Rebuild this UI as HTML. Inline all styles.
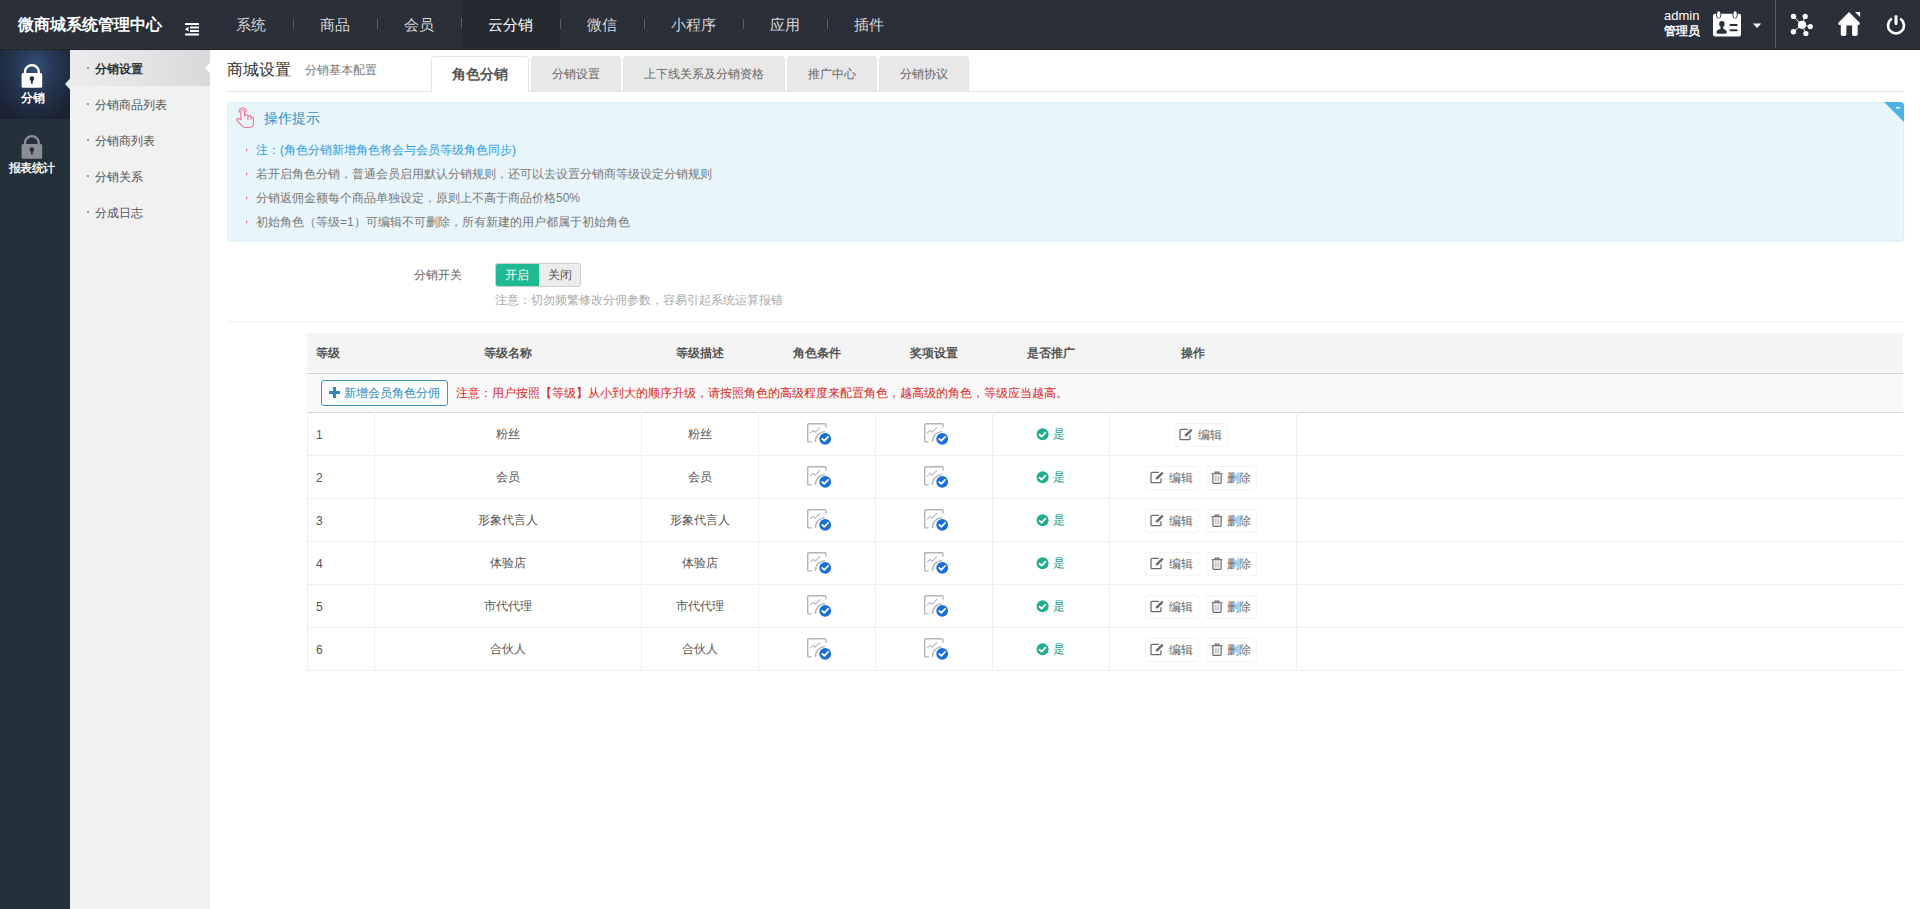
<!DOCTYPE html>
<html><head><meta charset="utf-8">
<style>
*{margin:0;padding:0;box-sizing:border-box}
html,body{width:1920px;height:909px;overflow:hidden;background:#fff;font-family:"Liberation Sans",sans-serif;}
.a{position:absolute;white-space:nowrap}
#top{position:absolute;left:0;top:0;width:1920px;height:50px;background:#2b2f3a;}
#top .l1{position:absolute;left:0;top:48px;width:1920px;height:1px;background:#30343a}
#top .l2{position:absolute;left:0;top:49px;width:1920px;height:1px;background:#1f2227}
.logo{left:18px;top:15px;font-size:16px;font-weight:bold;color:#fff;line-height:20px}
.nav{position:absolute;left:209px;top:1px;height:48px;display:flex}
.nav div{position:relative;padding:0 27px;height:48px;line-height:48px;font-size:15px;color:#d5d7da}
.nav div+div:before{content:"";position:absolute;left:0;top:18px;width:1px;height:10px;background:#5a5e66}
.nav div.on{color:#fff}
.nav div.on{background:linear-gradient(90deg,transparent 1px,#252932 1px);margin-top:-1px;padding-top:1px;height:48px}
#lc{position:absolute;left:0;top:50px;width:70px;height:859px;background:#24303a}
#lc .act{position:absolute;left:0;top:0;width:70px;height:69px;background:radial-gradient(ellipse 45px 55px at 35px 18px,#34507a 0%,#263752 45%,#1b2333 100%)}
#sb{position:absolute;left:70px;top:50px;width:140px;height:859px;background:#f1f1f1}
#sb .act{position:absolute;left:0;top:0;width:140px;height:36px;background:linear-gradient(90deg,#ececee 0%,#e2e2e4 60%,#d8d8da 100%)}
#sb .item{position:absolute;left:25px;font-size:12px;color:#555;line-height:16px}
#sb .dot{position:absolute;left:17px;width:2px;height:2px;background:#999}
</style></head><body>
<div id="top">
  <div class="l1"></div><div class="l2"></div>
  <div class="a logo">微商城系统管理中心</div>
  <svg class="a" style="left:184px;top:23px" width="16" height="13" viewBox="0 0 16 13">
    <rect x="1" y="0" width="14" height="2" fill="#fff"/>
    <rect x="6" y="3.5" width="9" height="2" fill="#fff"/>
    <rect x="6" y="7" width="9" height="2" fill="#fff"/>
    <rect x="1" y="10.5" width="14" height="2" fill="#fff"/>
    <path d="M1 6.2 L4.5 3.8 L4.5 8.6 Z" fill="#fff"/>
  </svg>
  <div class="nav">
    <div>系统</div><div>商品</div><div>会员</div><div class="on">云分销</div><div>微信</div><div>小程序</div><div>应用</div><div>插件</div>
  </div>
  <div class="a" style="left:1664px;top:9px;font-size:13px;color:#fff;line-height:14px">admin</div>
  <div class="a" style="left:1664px;top:23px;font-size:12px;font-weight:bold;color:#fff;line-height:16px">管理员</div>
  <svg class="a" style="left:1712px;top:10px" width="30" height="28" viewBox="0 0 30 28">
    <rect x="1" y="3.7" width="28" height="22.8" rx="2" fill="#fff"/>
    <ellipse cx="6.7" cy="4.6" rx="2.6" ry="4" fill="#2b2f3a"/>
    <ellipse cx="6.7" cy="4.6" rx="1.7" ry="3.4" fill="#fff"/>
    <ellipse cx="23.1" cy="4.6" rx="2.6" ry="4" fill="#2b2f3a"/>
    <ellipse cx="23.1" cy="4.6" rx="1.7" ry="3.4" fill="#fff"/>
    <ellipse cx="9.85" cy="14.1" rx="2.75" ry="3" fill="#2b2f3a"/>
    <path d="M8.6 16.5 L11.1 16.5 L11.4 18.9 Q14.6 19.6 14.9 22.3 Q14.9 23.8 12.5 23.8 L7 23.8 Q4.2 23.8 4.3 22.3 Q4.7 19.6 8.3 18.9 Z" fill="#2b2f3a"/>
    <rect x="17.4" y="14.1" width="8.3" height="2" rx="1" fill="#2b2f3a"/>
    <rect x="17.4" y="19.3" width="8.3" height="2" rx="1" fill="#2b2f3a"/>
  </svg>
  <svg class="a" style="left:1752px;top:23px" width="10" height="6" viewBox="0 0 10 6"><path d="M0.8 0.6 L9.2 0.6 L5 5 Z" fill="#fff"/></svg>
  <div class="a" style="left:1775px;top:0;width:1px;height:48px;background:#5a5f68"></div>
  <svg class="a" style="left:1788px;top:11px" width="28" height="28" viewBox="0 0 28 28">
    <g stroke="#fff" stroke-width="0.9">
      <line x1="14" y1="13.8" x2="5.5" y2="5.4"/><line x1="14" y1="13.8" x2="17.2" y2="5.4"/>
      <line x1="14" y1="13.8" x2="22.3" y2="15.6"/><line x1="14" y1="13.8" x2="5.5" y2="20.7"/>
      <line x1="14" y1="13.8" x2="17.9" y2="22.5"/>
    </g>
    <g fill="#fff">
      <circle cx="14" cy="13.8" r="4.1"/>
      <circle cx="5.5" cy="5.4" r="2.7"/><circle cx="17.2" cy="5.4" r="2.6"/>
      <circle cx="22.3" cy="15.6" r="2.6"/><circle cx="5.5" cy="20.7" r="2.7"/>
      <circle cx="17.9" cy="22.5" r="2.6"/>
    </g>
  </svg>
  <svg class="a" style="left:1836px;top:10px" width="28" height="28" viewBox="0 0 28 28">
    <path d="M13 2.1 L2.8 12.3 Q1.6 13.8 3 14.9 L4.8 14.9 L4.8 24.4 Q4.8 26.1 7.6 26.1 Q10.4 26.1 10.4 24.4 L10.4 15.4 L16.1 15.4 L16.1 24.4 Q16.1 26.1 18.9 26.1 Q21.7 26.1 21.7 24.4 L21.7 14.9 L23 14.9 Q24.5 13.8 23.5 12.4 Z" fill="#fff"/>
    <path d="M19 2.1 L24.1 2.1 L24.1 7 Z" fill="#fff"/>
  </svg>
  <svg class="a" style="left:1884px;top:12px" width="24" height="25" viewBox="0 0 24 25">
    <path d="M7 7.2 A8 8 0 1 0 17 7.2" fill="none" stroke="#fff" stroke-width="2.6" stroke-linecap="round"/>
    <line x1="12" y1="4.5" x2="12" y2="11.6" stroke="#fff" stroke-width="3" stroke-linecap="round"/>
  </svg>
</div>
<div id="lc">
  <div class="act"></div>
  <svg class="a" style="left:21px;top:13px" width="22" height="25" viewBox="0 0 22 25">
    <path d="M4 11 L4 9 A6.9 6.9 0 0 1 17.8 9 L17.8 11" fill="none" stroke="#fff" stroke-width="2.4"/>
    <rect x="0.6" y="10" width="20.6" height="14.7" rx="1.5" fill="#fff"/>
    <circle cx="10.9" cy="15.6" r="2.3" fill="#1f2838"/><path d="M9.8 16.2 L12 16.2 L11.6 20.8 L10.2 20.8 Z" fill="#1f2838"/>
  </svg>
  <div class="a" style="left:21px;top:40px;font-size:12px;font-weight:bold;color:#fff;line-height:16px">分销</div>
  <svg class="a" style="left:21px;top:84px" width="22" height="25" viewBox="0 0 22 25">
    <path d="M4 11 L4 9 A6.9 6.9 0 0 1 17.8 9 L17.8 11" fill="none" stroke="#8b8e94" stroke-width="2.4"/>
    <rect x="0.6" y="10" width="20.6" height="14.7" rx="1.5" fill="#8b8e94"/>
    <circle cx="10.9" cy="15.6" r="2.3" fill="#24303a"/><path d="M9.8 16.2 L12 16.2 L11.6 20.8 L10.2 20.8 Z" fill="#24303a"/>
  </svg>
  <div class="a" style="left:9px;top:110px;font-size:12px;font-weight:bold;color:#f3f3ee;line-height:16px;letter-spacing:-0.6px">报表统计</div>
  <svg class="a" style="left:65px;top:28px" width="5" height="12" viewBox="0 0 5 12"><path d="M5 0.5 L0 6 L5 11.5 Z" fill="#e8e8ea"/></svg>
</div>
<div id="sb">
  <div class="act"></div>
  <div class="dot" style="top:17px"></div><div class="item" style="top:11px;font-weight:bold;color:#333">分销设置</div>
  <div class="dot" style="top:53px"></div><div class="item" style="top:47px">分销商品列表</div>
  <div class="dot" style="top:89px"></div><div class="item" style="top:83px">分销商列表</div>
  <div class="dot" style="top:125px"></div><div class="item" style="top:119px">分销关系</div>
  <div class="dot" style="top:161px"></div><div class="item" style="top:155px">分成日志</div>
  <svg class="a" style="left:135px;top:12px" width="5" height="12" viewBox="0 0 5 12"><path d="M5 0.5 L0 6 L5 11.5 Z" fill="#fff"/></svg>
</div>

<style>
.tab{position:absolute;top:56px;height:35px;border:1px solid #e4e4e4;border-bottom:none;border-radius:4px 4px 0 0;background:#e8e8e8;font-size:12px;color:#666;line-height:35px;text-align:center}
.tab.on{background:#fff;color:#555;font-weight:bold;font-size:14px;height:36px}
.tip{position:absolute;left:256px;font-size:12px;color:#777;line-height:16px}
.tipb{position:absolute;left:246px;width:0;height:0;border-left:2px solid #ea89a3;border-top:2px solid transparent;border-bottom:2px solid transparent}
.th{position:absolute;top:345px;font-size:12px;font-weight:bold;color:#555;line-height:16px}
.vl{position:absolute;top:412px;width:1px;height:258px;background:#efefef}
.hl{position:absolute;left:307px;width:1596px;height:1px;background:#eeeeee}
.td{position:absolute;font-size:12px;color:#555;line-height:16px;text-align:center}
.btn{position:absolute;height:24px;border:1px solid #f4f4f4;box-shadow:0 0 1px rgba(0,0,0,0.03);border-radius:3px;background:#fff;font-size:12px;color:#666;line-height:22px}
</style>
<div class="a" style="left:227px;top:60px;font-size:16px;color:#333;line-height:20px">商城设置</div>
<div class="a" style="left:305px;top:62px;font-size:12px;color:#777;line-height:16px">分销基本配置</div>
<div class="a" style="left:227px;top:91px;width:1677px;height:1px;background:#e6e6e6"></div>
<div class="tab on" style="left:431px;width:98px">角色分销</div>
<div class="tab" style="left:531px;width:90px">分销设置</div>
<div class="tab" style="left:623px;width:162px">上下线关系及分销资格</div>
<div class="tab" style="left:787px;width:90px">推广中心</div>
<div class="tab" style="left:879px;width:90px">分销协议</div>

<div class="a" style="left:227px;top:102px;width:1677px;height:139px;background:#e8f6fc;border-radius:4px;border:1px solid #dbedf7;box-shadow:0 1px 1px rgba(120,150,170,0.12)"></div>
<svg class="a" style="left:1884px;top:102px" width="20" height="20" viewBox="0 0 20 20"><path d="M0 0 L16 0 Q20 0 20 4 L20 20 Z" fill="#4bb3e6"/><rect x="12" y="5" width="4" height="1.4" fill="#fff"/></svg>
<svg class="a" style="left:234px;top:106px" width="22" height="24" viewBox="0 0 22 24">
  <path d="M6.9 13.8 L6.9 5.6 A1.85 1.85 0 0 1 10.6 5.6 L10.6 10.2 A1.7 1.7 0 0 1 14 10.2 L14 11.2 A1.6 1.6 0 0 1 17.2 11.2 L17.2 12 A1.1 1.1 0 0 1 19.4 12.2 L19.4 17.5 Q19.4 21.5 15 21.5 L11.5 21.5 Q9.5 21.5 8.2 20 L3 14.6 Q2 13.3 3.3 12.8 Q4.8 12.3 6.9 13.8 Z" fill="none" stroke="#ee7393" stroke-width="1.1" stroke-linejoin="round"/>
  <path d="M5.37 6.63 A3.6 3.6 0 1 1 12.13 6.63" fill="none" stroke="#ee7393" stroke-width="1.1"/>
  <path d="M14 11.2 L14 14 M17.2 12 L17.2 14.2" stroke="#ee7393" stroke-width="0.9"/>
</svg>
<div class="a" style="left:264px;top:109px;font-size:14px;color:#2e8fc4;line-height:18px">操作提示</div>
<div class="tipb" style="top:148px"></div><div class="tip" style="top:142px;color:#2c9be0">注：(角色分销新增角色将会与会员等级角色同步)</div>
<div class="tipb" style="top:172px"></div><div class="tip" style="top:166px">若开启角色分销，普通会员启用默认分销规则，还可以去设置分销商等级设定分销规则</div>
<div class="tipb" style="top:196px"></div><div class="tip" style="top:190px">分销返佣金额每个商品单独设定，原则上不高于商品价格50%</div>
<div class="tipb" style="top:220px"></div><div class="tip" style="top:214px">初始角色（等级=1）可编辑不可删除，所有新建的用户都属于初始角色</div>

<div class="a" style="left:414px;top:267px;font-size:12px;color:#666;line-height:16px">分销开关</div>
<div class="a" style="left:495px;top:263px;width:86px;height:24px;border:1px solid #cfcfcf;border-radius:3px;background:#ececec;overflow:hidden">
  <div class="a" style="left:-1px;top:-1px;width:44px;height:24px;background:#1fba92;color:#fff;font-size:12px;line-height:24px;text-align:center">开启</div>
  <div class="a" style="left:43px;top:0;width:42px;height:22px;color:#555;font-size:12px;line-height:22px;text-align:center">关闭</div>
</div>
<div class="a" style="left:495px;top:292px;font-size:12px;color:#aaa;line-height:16px">注意：切勿频繁修改分佣参数，容易引起系统运算报错</div>
<div class="a" style="left:227px;top:321px;width:1677px;height:1px;background:#f0f0f0"></div>

<div class="a" style="left:307px;top:333px;width:1596px;height:39px;background:#f4f4f4"></div>
<div class="a" style="left:307px;top:373px;width:1596px;height:1px;background:#d2d2d2"></div>
<div class="a" style="left:307px;top:374px;width:1596px;height:38px;background:#f9f9f9"></div>
<div class="a" style="left:307px;top:412px;width:1596px;height:1px;background:#d8d8d8"></div>
<div class="th" style="left:316px">等级</div>
<div class="th" style="left:484px">等级名称</div>
<div class="th" style="left:676px">等级描述</div>
<div class="th" style="left:793px">角色条件</div>
<div class="th" style="left:910px">奖项设置</div>
<div class="th" style="left:1027px">是否推广</div>
<div class="th" style="left:1181px">操作</div>
<div class="a" style="left:321px;top:380px;width:127px;height:26px;border:1px solid #3d93bd;border-radius:3px;background:#fff;font-size:12px;color:#2a8bbf;line-height:24px;padding-left:22px">新增会员角色分佣</div>
<svg class="a" style="left:329px;top:387px" width="11" height="11" viewBox="0 0 11 11"><rect x="4" y="0" width="3" height="11" fill="#2a8bbf"/><rect x="0" y="4" width="11" height="3" fill="#2a8bbf"/></svg>
<div class="a" style="left:456px;top:385px;font-size:12px;color:#dc1f24;line-height:16px">注意：用户按照【等级】从小到大的顺序升级，请按照角色的高级程度来配置角色，越高级的角色，等级应当越高。</div>
<div class="vl" style="left:307px"></div>
<div class="vl" style="left:374px"></div>
<div class="vl" style="left:641px"></div>
<div class="vl" style="left:758px"></div>
<div class="vl" style="left:875px"></div>
<div class="vl" style="left:992px"></div>
<div class="vl" style="left:1109px"></div>
<div class="vl" style="left:1296px"></div>
<div class="hl" style="top:455px"></div>
<div class="td" style="left:316px;top:427px;text-align:left">1</div>
<div class="td" style="left:374px;width:267px;top:426px">粉丝</div>
<div class="td" style="left:641px;width:117px;top:426px">粉丝</div>
<svg class="a" style="left:806px;top:423px" width="26" height="24" viewBox="0 0 26 24">
<path d="M5.8 18.9 L2.7 18.9 Q1.7 18.9 1.7 17.9 L1.7 1.8 Q1.7 0.8 2.7 0.8 L19 0.8 Q20 0.8 20 1.8 L20 4.6" fill="none" stroke="#b1b4bb" stroke-width="1.4"/>
<path d="M4 10.2 L7.3 7.4 L9 9.3 L14 4.4" fill="none" stroke="#b1b4bb" stroke-width="1.1"/>
<path d="M9.4 19 A10 10 0 0 1 19 8.6" fill="none" stroke="#b1b4bb" stroke-width="1.3"/>
<circle cx="19.2" cy="15.8" r="5.9" fill="#1a6ed8"/>
<path d="M16.2 15.9 L18.3 17.9 L22.1 13.9" fill="none" stroke="#fff" stroke-width="1.7" stroke-linecap="round" stroke-linejoin="round"/>
</svg>
<svg class="a" style="left:923px;top:423px" width="26" height="24" viewBox="0 0 26 24">
<path d="M5.8 18.9 L2.7 18.9 Q1.7 18.9 1.7 17.9 L1.7 1.8 Q1.7 0.8 2.7 0.8 L19 0.8 Q20 0.8 20 1.8 L20 4.6" fill="none" stroke="#b1b4bb" stroke-width="1.4"/>
<path d="M4 10.2 L7.3 7.4 L9 9.3 L14 4.4" fill="none" stroke="#b1b4bb" stroke-width="1.1"/>
<path d="M9.4 19 A10 10 0 0 1 19 8.6" fill="none" stroke="#b1b4bb" stroke-width="1.3"/>
<circle cx="19.2" cy="15.8" r="5.9" fill="#1a6ed8"/>
<path d="M16.2 15.9 L18.3 17.9 L22.1 13.9" fill="none" stroke="#fff" stroke-width="1.7" stroke-linecap="round" stroke-linejoin="round"/>
</svg>
<svg class="a" style="left:1036px;top:428px" width="13" height="13" viewBox="0 0 13 13"><circle cx="6.6" cy="6.3" r="6" fill="#22ad8c"/><path d="M3.5 6.6 L5.6 8.6 L9.4 4.6" fill="none" stroke="#fff" stroke-width="1.8" stroke-linecap="round" stroke-linejoin="round"/></svg>
<div class="td" style="left:1053px;top:426px;color:#1d9e80">是</div>
<div class="btn" style="left:1174px;top:423px;width:54px"></div>
<svg class="a" style="left:1179px;top:428px" width="15" height="13" viewBox="0 0 15 13"><path d="M8.8 1.3 L2 1.3 Q1 1.3 1 2.3 L1 10.7 Q1 11.7 2 11.7 L10 11.7 Q11 11.7 11 10.7 L11 7.2" fill="none" stroke="#6a6a6a" stroke-width="1.25"/><path d="M5.6 8.6 L6.1 6.5 L11.9 0.8 L13.6 2.5 L7.8 8.2 Z" fill="#6a6a6a"/></svg>
<div class="td" style="left:1198px;top:427px;color:#666">编辑</div>
<div class="hl" style="top:498px"></div>
<div class="td" style="left:316px;top:470px;text-align:left">2</div>
<div class="td" style="left:374px;width:267px;top:469px">会员</div>
<div class="td" style="left:641px;width:117px;top:469px">会员</div>
<svg class="a" style="left:806px;top:466px" width="26" height="24" viewBox="0 0 26 24">
<path d="M5.8 18.9 L2.7 18.9 Q1.7 18.9 1.7 17.9 L1.7 1.8 Q1.7 0.8 2.7 0.8 L19 0.8 Q20 0.8 20 1.8 L20 4.6" fill="none" stroke="#b1b4bb" stroke-width="1.4"/>
<path d="M4 10.2 L7.3 7.4 L9 9.3 L14 4.4" fill="none" stroke="#b1b4bb" stroke-width="1.1"/>
<path d="M9.4 19 A10 10 0 0 1 19 8.6" fill="none" stroke="#b1b4bb" stroke-width="1.3"/>
<circle cx="19.2" cy="15.8" r="5.9" fill="#1a6ed8"/>
<path d="M16.2 15.9 L18.3 17.9 L22.1 13.9" fill="none" stroke="#fff" stroke-width="1.7" stroke-linecap="round" stroke-linejoin="round"/>
</svg>
<svg class="a" style="left:923px;top:466px" width="26" height="24" viewBox="0 0 26 24">
<path d="M5.8 18.9 L2.7 18.9 Q1.7 18.9 1.7 17.9 L1.7 1.8 Q1.7 0.8 2.7 0.8 L19 0.8 Q20 0.8 20 1.8 L20 4.6" fill="none" stroke="#b1b4bb" stroke-width="1.4"/>
<path d="M4 10.2 L7.3 7.4 L9 9.3 L14 4.4" fill="none" stroke="#b1b4bb" stroke-width="1.1"/>
<path d="M9.4 19 A10 10 0 0 1 19 8.6" fill="none" stroke="#b1b4bb" stroke-width="1.3"/>
<circle cx="19.2" cy="15.8" r="5.9" fill="#1a6ed8"/>
<path d="M16.2 15.9 L18.3 17.9 L22.1 13.9" fill="none" stroke="#fff" stroke-width="1.7" stroke-linecap="round" stroke-linejoin="round"/>
</svg>
<svg class="a" style="left:1036px;top:471px" width="13" height="13" viewBox="0 0 13 13"><circle cx="6.6" cy="6.3" r="6" fill="#22ad8c"/><path d="M3.5 6.6 L5.6 8.6 L9.4 4.6" fill="none" stroke="#fff" stroke-width="1.8" stroke-linecap="round" stroke-linejoin="round"/></svg>
<div class="td" style="left:1053px;top:469px;color:#1d9e80">是</div>
<div class="btn" style="left:1145px;top:466px;width:54px"></div>
<svg class="a" style="left:1150px;top:471px" width="15" height="13" viewBox="0 0 15 13"><path d="M8.8 1.3 L2 1.3 Q1 1.3 1 2.3 L1 10.7 Q1 11.7 2 11.7 L10 11.7 Q11 11.7 11 10.7 L11 7.2" fill="none" stroke="#6a6a6a" stroke-width="1.25"/><path d="M5.6 8.6 L6.1 6.5 L11.9 0.8 L13.6 2.5 L7.8 8.2 Z" fill="#6a6a6a"/></svg>
<div class="td" style="left:1169px;top:470px;color:#666">编辑</div>
<div class="btn" style="left:1206px;top:466px;width:51px"></div>
<svg class="a" style="left:1211px;top:471px" width="12" height="13" viewBox="0 0 12 13"><path d="M0.6 2.7 L11.4 2.7" stroke="#6a6a6a" stroke-width="1.2"/><path d="M4 2.4 L4 1.1 L8 1.1 L8 2.4" fill="none" stroke="#6a6a6a" stroke-width="1.1"/><path d="M1.9 3.2 L1.9 11.3 Q1.9 12.3 2.9 12.3 L9.1 12.3 Q10.1 12.3 10.1 11.3 L10.1 3.2" fill="none" stroke="#6a6a6a" stroke-width="1.2"/><path d="M4.3 4.6 L4.3 10.6 M6 4.6 L6 10.6 M7.7 4.6 L7.7 10.6" stroke="#9a9a9a" stroke-width="0.7"/></svg>
<div class="td" style="left:1227px;top:470px;color:#666">删除</div>
<div class="hl" style="top:541px"></div>
<div class="td" style="left:316px;top:513px;text-align:left">3</div>
<div class="td" style="left:374px;width:267px;top:512px">形象代言人</div>
<div class="td" style="left:641px;width:117px;top:512px">形象代言人</div>
<svg class="a" style="left:806px;top:509px" width="26" height="24" viewBox="0 0 26 24">
<path d="M5.8 18.9 L2.7 18.9 Q1.7 18.9 1.7 17.9 L1.7 1.8 Q1.7 0.8 2.7 0.8 L19 0.8 Q20 0.8 20 1.8 L20 4.6" fill="none" stroke="#b1b4bb" stroke-width="1.4"/>
<path d="M4 10.2 L7.3 7.4 L9 9.3 L14 4.4" fill="none" stroke="#b1b4bb" stroke-width="1.1"/>
<path d="M9.4 19 A10 10 0 0 1 19 8.6" fill="none" stroke="#b1b4bb" stroke-width="1.3"/>
<circle cx="19.2" cy="15.8" r="5.9" fill="#1a6ed8"/>
<path d="M16.2 15.9 L18.3 17.9 L22.1 13.9" fill="none" stroke="#fff" stroke-width="1.7" stroke-linecap="round" stroke-linejoin="round"/>
</svg>
<svg class="a" style="left:923px;top:509px" width="26" height="24" viewBox="0 0 26 24">
<path d="M5.8 18.9 L2.7 18.9 Q1.7 18.9 1.7 17.9 L1.7 1.8 Q1.7 0.8 2.7 0.8 L19 0.8 Q20 0.8 20 1.8 L20 4.6" fill="none" stroke="#b1b4bb" stroke-width="1.4"/>
<path d="M4 10.2 L7.3 7.4 L9 9.3 L14 4.4" fill="none" stroke="#b1b4bb" stroke-width="1.1"/>
<path d="M9.4 19 A10 10 0 0 1 19 8.6" fill="none" stroke="#b1b4bb" stroke-width="1.3"/>
<circle cx="19.2" cy="15.8" r="5.9" fill="#1a6ed8"/>
<path d="M16.2 15.9 L18.3 17.9 L22.1 13.9" fill="none" stroke="#fff" stroke-width="1.7" stroke-linecap="round" stroke-linejoin="round"/>
</svg>
<svg class="a" style="left:1036px;top:514px" width="13" height="13" viewBox="0 0 13 13"><circle cx="6.6" cy="6.3" r="6" fill="#22ad8c"/><path d="M3.5 6.6 L5.6 8.6 L9.4 4.6" fill="none" stroke="#fff" stroke-width="1.8" stroke-linecap="round" stroke-linejoin="round"/></svg>
<div class="td" style="left:1053px;top:512px;color:#1d9e80">是</div>
<div class="btn" style="left:1145px;top:509px;width:54px"></div>
<svg class="a" style="left:1150px;top:514px" width="15" height="13" viewBox="0 0 15 13"><path d="M8.8 1.3 L2 1.3 Q1 1.3 1 2.3 L1 10.7 Q1 11.7 2 11.7 L10 11.7 Q11 11.7 11 10.7 L11 7.2" fill="none" stroke="#6a6a6a" stroke-width="1.25"/><path d="M5.6 8.6 L6.1 6.5 L11.9 0.8 L13.6 2.5 L7.8 8.2 Z" fill="#6a6a6a"/></svg>
<div class="td" style="left:1169px;top:513px;color:#666">编辑</div>
<div class="btn" style="left:1206px;top:509px;width:51px"></div>
<svg class="a" style="left:1211px;top:514px" width="12" height="13" viewBox="0 0 12 13"><path d="M0.6 2.7 L11.4 2.7" stroke="#6a6a6a" stroke-width="1.2"/><path d="M4 2.4 L4 1.1 L8 1.1 L8 2.4" fill="none" stroke="#6a6a6a" stroke-width="1.1"/><path d="M1.9 3.2 L1.9 11.3 Q1.9 12.3 2.9 12.3 L9.1 12.3 Q10.1 12.3 10.1 11.3 L10.1 3.2" fill="none" stroke="#6a6a6a" stroke-width="1.2"/><path d="M4.3 4.6 L4.3 10.6 M6 4.6 L6 10.6 M7.7 4.6 L7.7 10.6" stroke="#9a9a9a" stroke-width="0.7"/></svg>
<div class="td" style="left:1227px;top:513px;color:#666">删除</div>
<div class="hl" style="top:584px"></div>
<div class="td" style="left:316px;top:556px;text-align:left">4</div>
<div class="td" style="left:374px;width:267px;top:555px">体验店</div>
<div class="td" style="left:641px;width:117px;top:555px">体验店</div>
<svg class="a" style="left:806px;top:552px" width="26" height="24" viewBox="0 0 26 24">
<path d="M5.8 18.9 L2.7 18.9 Q1.7 18.9 1.7 17.9 L1.7 1.8 Q1.7 0.8 2.7 0.8 L19 0.8 Q20 0.8 20 1.8 L20 4.6" fill="none" stroke="#b1b4bb" stroke-width="1.4"/>
<path d="M4 10.2 L7.3 7.4 L9 9.3 L14 4.4" fill="none" stroke="#b1b4bb" stroke-width="1.1"/>
<path d="M9.4 19 A10 10 0 0 1 19 8.6" fill="none" stroke="#b1b4bb" stroke-width="1.3"/>
<circle cx="19.2" cy="15.8" r="5.9" fill="#1a6ed8"/>
<path d="M16.2 15.9 L18.3 17.9 L22.1 13.9" fill="none" stroke="#fff" stroke-width="1.7" stroke-linecap="round" stroke-linejoin="round"/>
</svg>
<svg class="a" style="left:923px;top:552px" width="26" height="24" viewBox="0 0 26 24">
<path d="M5.8 18.9 L2.7 18.9 Q1.7 18.9 1.7 17.9 L1.7 1.8 Q1.7 0.8 2.7 0.8 L19 0.8 Q20 0.8 20 1.8 L20 4.6" fill="none" stroke="#b1b4bb" stroke-width="1.4"/>
<path d="M4 10.2 L7.3 7.4 L9 9.3 L14 4.4" fill="none" stroke="#b1b4bb" stroke-width="1.1"/>
<path d="M9.4 19 A10 10 0 0 1 19 8.6" fill="none" stroke="#b1b4bb" stroke-width="1.3"/>
<circle cx="19.2" cy="15.8" r="5.9" fill="#1a6ed8"/>
<path d="M16.2 15.9 L18.3 17.9 L22.1 13.9" fill="none" stroke="#fff" stroke-width="1.7" stroke-linecap="round" stroke-linejoin="round"/>
</svg>
<svg class="a" style="left:1036px;top:557px" width="13" height="13" viewBox="0 0 13 13"><circle cx="6.6" cy="6.3" r="6" fill="#22ad8c"/><path d="M3.5 6.6 L5.6 8.6 L9.4 4.6" fill="none" stroke="#fff" stroke-width="1.8" stroke-linecap="round" stroke-linejoin="round"/></svg>
<div class="td" style="left:1053px;top:555px;color:#1d9e80">是</div>
<div class="btn" style="left:1145px;top:552px;width:54px"></div>
<svg class="a" style="left:1150px;top:557px" width="15" height="13" viewBox="0 0 15 13"><path d="M8.8 1.3 L2 1.3 Q1 1.3 1 2.3 L1 10.7 Q1 11.7 2 11.7 L10 11.7 Q11 11.7 11 10.7 L11 7.2" fill="none" stroke="#6a6a6a" stroke-width="1.25"/><path d="M5.6 8.6 L6.1 6.5 L11.9 0.8 L13.6 2.5 L7.8 8.2 Z" fill="#6a6a6a"/></svg>
<div class="td" style="left:1169px;top:556px;color:#666">编辑</div>
<div class="btn" style="left:1206px;top:552px;width:51px"></div>
<svg class="a" style="left:1211px;top:557px" width="12" height="13" viewBox="0 0 12 13"><path d="M0.6 2.7 L11.4 2.7" stroke="#6a6a6a" stroke-width="1.2"/><path d="M4 2.4 L4 1.1 L8 1.1 L8 2.4" fill="none" stroke="#6a6a6a" stroke-width="1.1"/><path d="M1.9 3.2 L1.9 11.3 Q1.9 12.3 2.9 12.3 L9.1 12.3 Q10.1 12.3 10.1 11.3 L10.1 3.2" fill="none" stroke="#6a6a6a" stroke-width="1.2"/><path d="M4.3 4.6 L4.3 10.6 M6 4.6 L6 10.6 M7.7 4.6 L7.7 10.6" stroke="#9a9a9a" stroke-width="0.7"/></svg>
<div class="td" style="left:1227px;top:556px;color:#666">删除</div>
<div class="hl" style="top:627px"></div>
<div class="td" style="left:316px;top:599px;text-align:left">5</div>
<div class="td" style="left:374px;width:267px;top:598px">市代代理</div>
<div class="td" style="left:641px;width:117px;top:598px">市代代理</div>
<svg class="a" style="left:806px;top:595px" width="26" height="24" viewBox="0 0 26 24">
<path d="M5.8 18.9 L2.7 18.9 Q1.7 18.9 1.7 17.9 L1.7 1.8 Q1.7 0.8 2.7 0.8 L19 0.8 Q20 0.8 20 1.8 L20 4.6" fill="none" stroke="#b1b4bb" stroke-width="1.4"/>
<path d="M4 10.2 L7.3 7.4 L9 9.3 L14 4.4" fill="none" stroke="#b1b4bb" stroke-width="1.1"/>
<path d="M9.4 19 A10 10 0 0 1 19 8.6" fill="none" stroke="#b1b4bb" stroke-width="1.3"/>
<circle cx="19.2" cy="15.8" r="5.9" fill="#1a6ed8"/>
<path d="M16.2 15.9 L18.3 17.9 L22.1 13.9" fill="none" stroke="#fff" stroke-width="1.7" stroke-linecap="round" stroke-linejoin="round"/>
</svg>
<svg class="a" style="left:923px;top:595px" width="26" height="24" viewBox="0 0 26 24">
<path d="M5.8 18.9 L2.7 18.9 Q1.7 18.9 1.7 17.9 L1.7 1.8 Q1.7 0.8 2.7 0.8 L19 0.8 Q20 0.8 20 1.8 L20 4.6" fill="none" stroke="#b1b4bb" stroke-width="1.4"/>
<path d="M4 10.2 L7.3 7.4 L9 9.3 L14 4.4" fill="none" stroke="#b1b4bb" stroke-width="1.1"/>
<path d="M9.4 19 A10 10 0 0 1 19 8.6" fill="none" stroke="#b1b4bb" stroke-width="1.3"/>
<circle cx="19.2" cy="15.8" r="5.9" fill="#1a6ed8"/>
<path d="M16.2 15.9 L18.3 17.9 L22.1 13.9" fill="none" stroke="#fff" stroke-width="1.7" stroke-linecap="round" stroke-linejoin="round"/>
</svg>
<svg class="a" style="left:1036px;top:600px" width="13" height="13" viewBox="0 0 13 13"><circle cx="6.6" cy="6.3" r="6" fill="#22ad8c"/><path d="M3.5 6.6 L5.6 8.6 L9.4 4.6" fill="none" stroke="#fff" stroke-width="1.8" stroke-linecap="round" stroke-linejoin="round"/></svg>
<div class="td" style="left:1053px;top:598px;color:#1d9e80">是</div>
<div class="btn" style="left:1145px;top:595px;width:54px"></div>
<svg class="a" style="left:1150px;top:600px" width="15" height="13" viewBox="0 0 15 13"><path d="M8.8 1.3 L2 1.3 Q1 1.3 1 2.3 L1 10.7 Q1 11.7 2 11.7 L10 11.7 Q11 11.7 11 10.7 L11 7.2" fill="none" stroke="#6a6a6a" stroke-width="1.25"/><path d="M5.6 8.6 L6.1 6.5 L11.9 0.8 L13.6 2.5 L7.8 8.2 Z" fill="#6a6a6a"/></svg>
<div class="td" style="left:1169px;top:599px;color:#666">编辑</div>
<div class="btn" style="left:1206px;top:595px;width:51px"></div>
<svg class="a" style="left:1211px;top:600px" width="12" height="13" viewBox="0 0 12 13"><path d="M0.6 2.7 L11.4 2.7" stroke="#6a6a6a" stroke-width="1.2"/><path d="M4 2.4 L4 1.1 L8 1.1 L8 2.4" fill="none" stroke="#6a6a6a" stroke-width="1.1"/><path d="M1.9 3.2 L1.9 11.3 Q1.9 12.3 2.9 12.3 L9.1 12.3 Q10.1 12.3 10.1 11.3 L10.1 3.2" fill="none" stroke="#6a6a6a" stroke-width="1.2"/><path d="M4.3 4.6 L4.3 10.6 M6 4.6 L6 10.6 M7.7 4.6 L7.7 10.6" stroke="#9a9a9a" stroke-width="0.7"/></svg>
<div class="td" style="left:1227px;top:599px;color:#666">删除</div>
<div class="hl" style="top:670px"></div>
<div class="td" style="left:316px;top:642px;text-align:left">6</div>
<div class="td" style="left:374px;width:267px;top:641px">合伙人</div>
<div class="td" style="left:641px;width:117px;top:641px">合伙人</div>
<svg class="a" style="left:806px;top:638px" width="26" height="24" viewBox="0 0 26 24">
<path d="M5.8 18.9 L2.7 18.9 Q1.7 18.9 1.7 17.9 L1.7 1.8 Q1.7 0.8 2.7 0.8 L19 0.8 Q20 0.8 20 1.8 L20 4.6" fill="none" stroke="#b1b4bb" stroke-width="1.4"/>
<path d="M4 10.2 L7.3 7.4 L9 9.3 L14 4.4" fill="none" stroke="#b1b4bb" stroke-width="1.1"/>
<path d="M9.4 19 A10 10 0 0 1 19 8.6" fill="none" stroke="#b1b4bb" stroke-width="1.3"/>
<circle cx="19.2" cy="15.8" r="5.9" fill="#1a6ed8"/>
<path d="M16.2 15.9 L18.3 17.9 L22.1 13.9" fill="none" stroke="#fff" stroke-width="1.7" stroke-linecap="round" stroke-linejoin="round"/>
</svg>
<svg class="a" style="left:923px;top:638px" width="26" height="24" viewBox="0 0 26 24">
<path d="M5.8 18.9 L2.7 18.9 Q1.7 18.9 1.7 17.9 L1.7 1.8 Q1.7 0.8 2.7 0.8 L19 0.8 Q20 0.8 20 1.8 L20 4.6" fill="none" stroke="#b1b4bb" stroke-width="1.4"/>
<path d="M4 10.2 L7.3 7.4 L9 9.3 L14 4.4" fill="none" stroke="#b1b4bb" stroke-width="1.1"/>
<path d="M9.4 19 A10 10 0 0 1 19 8.6" fill="none" stroke="#b1b4bb" stroke-width="1.3"/>
<circle cx="19.2" cy="15.8" r="5.9" fill="#1a6ed8"/>
<path d="M16.2 15.9 L18.3 17.9 L22.1 13.9" fill="none" stroke="#fff" stroke-width="1.7" stroke-linecap="round" stroke-linejoin="round"/>
</svg>
<svg class="a" style="left:1036px;top:643px" width="13" height="13" viewBox="0 0 13 13"><circle cx="6.6" cy="6.3" r="6" fill="#22ad8c"/><path d="M3.5 6.6 L5.6 8.6 L9.4 4.6" fill="none" stroke="#fff" stroke-width="1.8" stroke-linecap="round" stroke-linejoin="round"/></svg>
<div class="td" style="left:1053px;top:641px;color:#1d9e80">是</div>
<div class="btn" style="left:1145px;top:638px;width:54px"></div>
<svg class="a" style="left:1150px;top:643px" width="15" height="13" viewBox="0 0 15 13"><path d="M8.8 1.3 L2 1.3 Q1 1.3 1 2.3 L1 10.7 Q1 11.7 2 11.7 L10 11.7 Q11 11.7 11 10.7 L11 7.2" fill="none" stroke="#6a6a6a" stroke-width="1.25"/><path d="M5.6 8.6 L6.1 6.5 L11.9 0.8 L13.6 2.5 L7.8 8.2 Z" fill="#6a6a6a"/></svg>
<div class="td" style="left:1169px;top:642px;color:#666">编辑</div>
<div class="btn" style="left:1206px;top:638px;width:51px"></div>
<svg class="a" style="left:1211px;top:643px" width="12" height="13" viewBox="0 0 12 13"><path d="M0.6 2.7 L11.4 2.7" stroke="#6a6a6a" stroke-width="1.2"/><path d="M4 2.4 L4 1.1 L8 1.1 L8 2.4" fill="none" stroke="#6a6a6a" stroke-width="1.1"/><path d="M1.9 3.2 L1.9 11.3 Q1.9 12.3 2.9 12.3 L9.1 12.3 Q10.1 12.3 10.1 11.3 L10.1 3.2" fill="none" stroke="#6a6a6a" stroke-width="1.2"/><path d="M4.3 4.6 L4.3 10.6 M6 4.6 L6 10.6 M7.7 4.6 L7.7 10.6" stroke="#9a9a9a" stroke-width="0.7"/></svg>
<div class="td" style="left:1227px;top:642px;color:#666">删除</div>

</body></html>
